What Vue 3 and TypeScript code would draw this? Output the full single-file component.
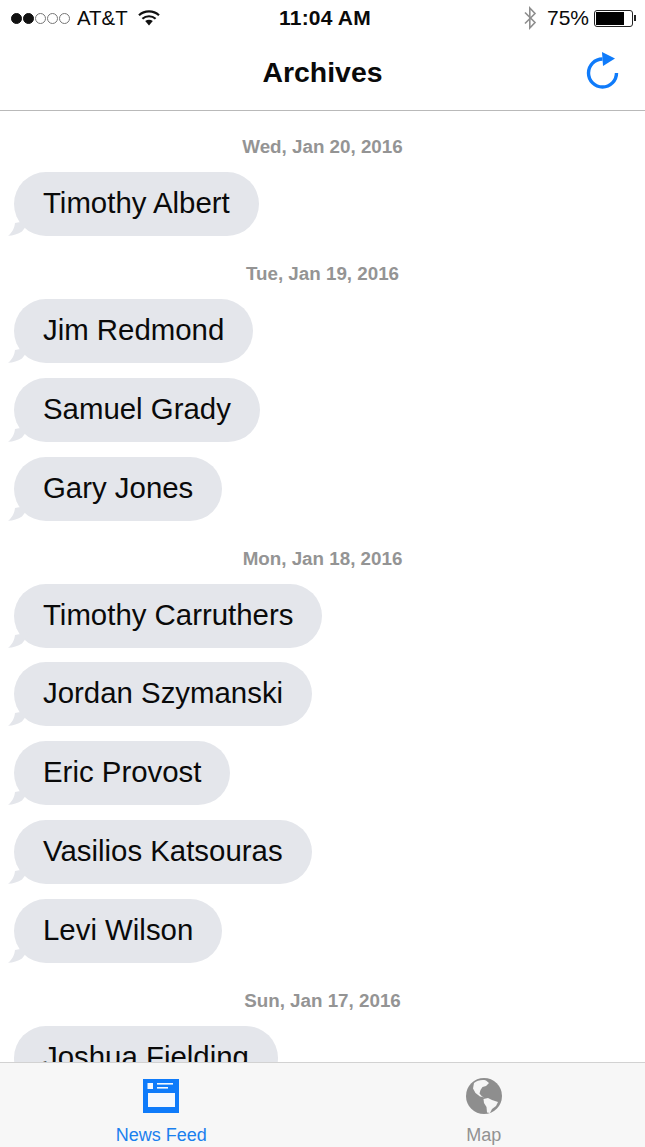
<script setup lang="ts">
interface Day {
  date: string;
  names: string[];
}

const days: Day[] = [
  { date: "Wed, Jan 20, 2016", names: ["Timothy Albert"] },
  { date: "Tue, Jan 19, 2016", names: ["Jim Redmond", "Samuel Grady", "Gary Jones"] },
  {
    date: "Mon, Jan 18, 2016",
    names: ["Timothy Carruthers", "Jordan Szymanski", "Eric Provost", "Vasilios Katsouras", "Levi Wilson"],
  },
  { date: "Sun, Jan 17, 2016", names: ["Joshua Fielding"] },
];
</script>

<template>
  <div class="screen">
    <header class="top">
      <div class="status">
        <div class="status-left">
          <span class="signal">
            <i class="dot on"></i><i class="dot on"></i><i class="dot"></i><i class="dot"></i><i class="dot"></i>
          </span>
          <span class="carrier">AT&amp;T</span>
          <svg class="wifi" width="22" height="16" viewBox="0 0 22 16">
            <path d="M1 5.2C6.6 0 15.4 0 21 5.2" fill="none" stroke="#111" stroke-width="2.2" />
            <path d="M4.4 8.7C8.1 5.4 13.9 5.4 17.6 8.7" fill="none" stroke="#111" stroke-width="2.2" />
            <path d="M7.2 11 C9.5 9.3 12.5 9.3 14.8 11 L11 15.5 Z" fill="#111" />
          </svg>
        </div>
        <span class="time">11:04 AM</span>
        <div class="status-right">
          <svg class="bt" width="14" height="24" viewBox="0 0 14 24">
            <path d="M2 6.5 L12 16.5 L6.8 22 V2 L12 7.5 L2 17.5" fill="none" stroke="#8e8e8e" stroke-width="1.6" />
          </svg>
          <span class="percent">75%</span>
          <span class="battery"><span class="battery-fill"></span></span>
          <span class="battery-tip"></span>
        </div>
      </div>
      <div class="nav">
        <h1 class="title">Archives</h1>
        <svg class="refresh" width="36" height="42" viewBox="0 0 36 42">
          <path d="M32.5 24A14 14 0 1 1 18.5 10" fill="none" stroke="#0f7bfa" stroke-width="3.4" />
          <path d="M18 3 L31 9.5 L19 17 Z" fill="#0f7bfa" />
        </svg>
      </div>
    </header>

    <main class="feed">
      <section v-for="day in days" :key="day.date" class="day">
        <div class="date">{{ day.date }}</div>
        <div v-for="name in day.names" :key="name" class="bubble">
          <svg class="tail" width="24" height="30" viewBox="0 0 24 30">
            <path d="M8 17 C7.5 22 5 27 1 29.8 C6 29.6 11 28 15 25.5 L24 14 Z" fill="#e4e6eb" />
          </svg>
          <span class="bubble-text">{{ name }}</span>
        </div>
      </section>
    </main>

    <footer class="tabs">
      <div class="tab active">
        <svg width="38" height="36" viewBox="0 0 38 36">
          <rect x="1" y="1" width="36" height="34" fill="#0f7bfa" />
          <rect x="5.5" y="5" width="5.5" height="6" fill="#f4f8fe" />
          <rect x="15" y="5" width="16" height="1.6" fill="#f4f8fe" />
          <rect x="15" y="9" width="11" height="1.6" fill="#f4f8fe" />
          <rect x="6" y="15" width="27" height="14" fill="#f4f8fe" />
        </svg>
        <span class="tab-label">News Feed</span>
      </div>
      <div class="tab">
        <svg width="38" height="36" viewBox="0 0 38 36">
          <circle cx="19" cy="18" r="18" fill="#8e8e8e" />
          <path
            d="M9 5 C12 2.5 17 1.5 21 2.5 L24 5 L21 8 L17.5 9 L15.5 12 L14.5 15.5 L17 18.5 L19.5 19.5 L15 18.5 L10.5 15 L8 10.5 Z"
            fill="#f5f5f5"
          />
          <path
            d="M18.5 21 L23 20 L27 22 L33 24 L31 28 L27 31 L25 35 L22 34.5 L21.5 29 L19 25 Z"
            fill="#f5f5f5"
          />
        </svg>
        <span class="tab-label">Map</span>
      </div>
    </footer>
  </div>
</template>

<style scoped>
.screen {
  width: 645px;
  height: 1147px;
  display: flex;
  flex-direction: column;
  overflow: hidden;
  background: #fff;
  font-family: "Liberation Sans", Arial, sans-serif;
  color: #0a0a0a;
}

.top {
  flex: none;
  height: 111px;
  border-bottom: 1px solid #b9b9b9;
  box-sizing: border-box;
}

.status {
  height: 36px;
  padding: 0 9px 0 11px;
  display: flex;
  align-items: center;
  justify-content: space-between;
  position: relative;
  font-size: 21px;
}

.status-left,
.status-right {
  display: flex;
  align-items: center;
}

.signal {
  display: flex;
  gap: 1px;
  margin-right: 7px;
}

.dot {
  width: 11px;
  height: 11px;
  border: 1px solid #777;
  border-radius: 50%;
  box-sizing: border-box;
}

.dot.on {
  background: #111;
  border-color: #111;
}

.carrier {
  font-size: 20.4px;
}

.wifi {
  margin-left: 10px;
}

/* la hora va centrada sobre la barra */
.time {
  position: absolute;
  left: 5px;
  right: 0;
  text-align: center;
  font-weight: 700;
  letter-spacing: 0.2px;
  pointer-events: none;
}

.bt {
  margin-right: 10px;
}

.percent {
  margin-right: 5px;
}

.battery {
  width: 39px;
  height: 17px;
  border: 1px solid #222;
  border-radius: 3px;
  box-sizing: border-box;
  padding: 1px;
  display: block;
}

.battery-fill {
  display: block;
  width: 28px;
  height: 100%;
  background: #000;
}

.battery-tip {
  width: 2px;
  height: 6px;
  margin-left: 1px;
  background: #222;
}

.nav {
  height: 72px;
  display: flex;
  align-items: center;
  justify-content: center;
  position: relative;
}

.title {
  margin: 0;
  font-size: 28.4px;
  font-weight: 700;
}

.refresh {
  position: absolute;
  right: 25px;
  top: 13px;
}

.feed {
  flex: 1;
  min-height: 0;
  overflow: hidden;
  padding-top: 24px;
}

.day {
  margin-bottom: 26px;
}

.date {
  height: 22px;
  line-height: 24px;
  margin-bottom: 15px;
  text-align: center;
  font-size: 18.8px;
  font-weight: 700;
  color: #949494;
}

.bubble {
  position: relative;
  width: fit-content;
  height: 64px;
  line-height: 61px;
  margin: 0 0 14.8px 14px;
  padding: 0 29px;
  border-radius: 32px;
  background: #e4e6eb;
  font-size: 29.4px;
}

.bubble:last-child {
  margin-bottom: 0;
}

.bubble-text {
  position: relative;
}

.tail {
  position: absolute;
  left: -7px;
  bottom: 0;
}

.tabs {
  flex: none;
  height: 85px;
  display: flex;
  background: #f7f7f7;
  border-top: 1px solid #d2d2d2;
  box-sizing: border-box;
}

.tab {
  flex: 1;
  display: flex;
  flex-direction: column;
  align-items: center;
  padding-top: 15px;
  color: #929292;
}

.tab.active {
  color: #1a80ee;
}

.tab-label {
  margin-top: 10px;
  font-size: 18px;
  line-height: 22px;
}
</style>
